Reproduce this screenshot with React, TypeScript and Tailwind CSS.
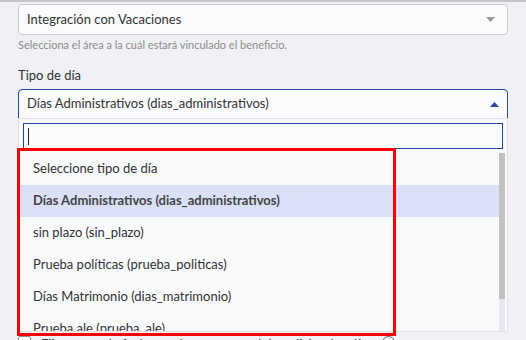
import React from "react"

const options = [
  "Seleccione tipo de día",
  "Días Administrativos (dias_administrativos)",
  "sin plazo (sin_plazo)",
  "Prueba políticas (prueba_politicas)",
  "Días Matrimonio (dias_matrimonio)",
  "Prueba ale (prueba_ale)",
]

function Caret({ up, color }: { up?: boolean; color: string }) {
  return (
    <svg width="9" height="5" viewBox="0 0 9 5" className="shrink-0">
      <path d={up ? "M0 5 L4.5 0 L9 5 Z" : "M0 0 L9 0 L4.5 5 Z"} fill={color} />
    </svg>
  )
}

export default function App() {
  const selected = 1

  return (
    <div
      className="relative w-[526px] h-[340px] overflow-hidden bg-[#f0f1f4] text-[#333]"
      style={{ fontFamily: "Lato, 'Open Sans', sans-serif" }}
    >
      <div className="h-[2px] bg-[#c4c5c9]" />
      <div className="px-[18px] pt-[2px]">
        {/* Area */}
        <div className="h-[31px] rounded-[4px] border border-[#c9cbcf] bg-[#fafbfc] flex items-center justify-between pl-[8px] pr-[12px] text-[13px]">
          <span>Integración con Vacaciones</span>
          <Caret color="#9a9a9a" />
        </div>
        <p className="mt-[3px] text-[11px] leading-[14px] text-[#8c8c8c]">
          Selecciona el área a la cuál estará vinculado el beneficio.
        </p>

        <label className="block mt-[14px] text-[13px] leading-[18px]">Tipo de día</label>

        {/* Tipo de dia select (open) */}
        <div className="relative mt-[5px]">
          <div className="h-[30px] rounded-t-[4px] border border-[#2b45a6] bg-[#fafbfc] flex items-center justify-between pl-[8px] pr-[8px] text-[13px]">
            <span>Días Administrativos (dias_administrativos)</span>
            <Caret up color="#2b45a6" />
          </div>

          <div className="absolute left-0 right-0 top-[29px] h-[214px] bg-[#f9fafc] border border-[#dfe1e6] flex flex-col z-10">
            <div className="mx-[4px] mt-[4px] h-[26px] border border-[#2b45a6] bg-[#fafbfc] flex items-center pl-[4px]">
              <span className="w-px h-[17px] bg-[#222]" />
            </div>
            <div className="flex flex-1 min-h-0 mt-[4px]">
              <ul className="flex-1 overflow-hidden">
                {options.map((opt, i) => (
                  <li
                    key={opt}
                    className={
                      i === selected
                        ? "h-[32px] shrink-0 flex items-center pl-[14px] text-[13px] font-bold text-[#444] bg-[#d9e0f7]"
                        : "h-[32px] shrink-0 flex items-center pl-[14px] text-[13px] text-[#333]"
                    }
                  >
                    {opt}
                  </li>
                ))}
              </ul>
              <div className="w-[6px] mr-[2px] flex flex-col">
                <div className="h-[146px] bg-[#c1c1c1]" />
                <div className="flex-1 bg-[#e6e7f2]" />
              </div>
            </div>
          </div>
        </div>

        {/* Row hidden behind the open dropdown */}
        <div className="mt-[216px] flex items-start gap-[10px] text-[13px] text-[#333]">
          <span className="mt-[1px] w-[13px] h-[13px] rounded-[2px] border border-[#888] bg-white" />
          <span>Fijar rango de fechas en los que se podrán solicitar los días</span>
          <span className="mt-[1px] w-[13px] h-[13px] rounded-full border border-[#666]" />
        </div>
      </div>

      {/* Annotation */}
      <div className="absolute left-[17px] top-[148px] w-[379px] h-[188px] border-[3px] border-[#ff0000] z-20 pointer-events-none" />
    </div>
  )
}
